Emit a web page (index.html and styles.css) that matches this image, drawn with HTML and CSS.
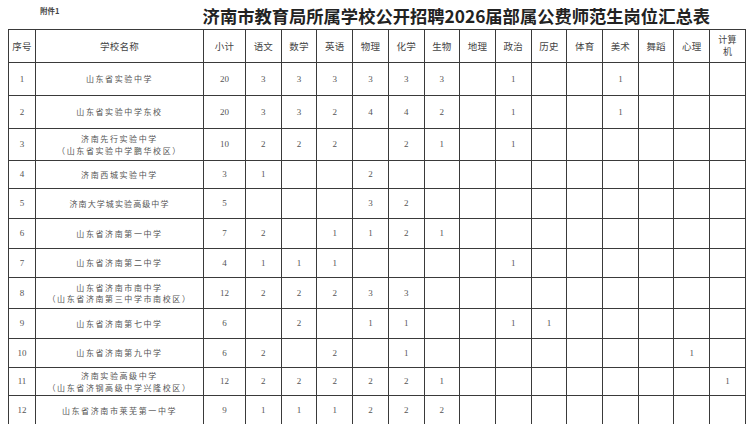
FILE: index.html
```html
<!DOCTYPE html>
<html lang="zh-CN">
<head>
<meta charset="utf-8">
<title>济南市教育局所属学校公开招聘2026届部属公费师范生岗位汇总表</title>
<link rel="stylesheet" href="styles.css">
</head>
<body>
<div class="page">
  <header class="top">
    <span class="annex">附件1</span>
    <h1 class="title">济南市教育局所属学校公开招聘2026届部属公费师范生岗位汇总表</h1>
  </header>
  <table class="grid">
    <colgroup>
      <col class="c-no"><col class="c-name"><col class="c-sum">
      <col><col><col><col><col><col><col><col><col><col><col><col><col><col>
    </colgroup>
    <thead>
      <tr class="h33">
        <th>序号</th><th>学校名称</th><th>小计</th><th>语文</th><th>数学</th><th>英语</th><th>物理</th><th>化学</th><th>生物</th><th>地理</th><th>政治</th><th>历史</th><th>体育</th><th>美术</th><th>舞蹈</th><th>心理</th><th class="two">计算<br>机</th>
      </tr>
    </thead>
    <tbody>
      <tr class="h33"><td>1</td><td class="name">山东省实验中学</td><td>20</td><td>3</td><td>3</td><td>3</td><td>3</td><td>3</td><td>3</td><td></td><td>1</td><td></td><td></td><td>1</td><td></td><td></td><td></td></tr>
      <tr class="h33"><td>2</td><td class="name">山东省实验中学东校</td><td>20</td><td>3</td><td>3</td><td>2</td><td>4</td><td>4</td><td>2</td><td></td><td>1</td><td></td><td></td><td>1</td><td></td><td></td><td></td></tr>
      <tr class="h32"><td>3</td><td class="name">济南先行实验中学<br>（山东省实验中学鹏华校区）</td><td>10</td><td>2</td><td>2</td><td>2</td><td></td><td>2</td><td>1</td><td></td><td>1</td><td></td><td></td><td></td><td></td><td></td><td></td></tr>
      <tr class="h28"><td>4</td><td class="name">济南西城实验中学</td><td>3</td><td>1</td><td></td><td></td><td>2</td><td></td><td></td><td></td><td></td><td></td><td></td><td></td><td></td><td></td><td></td></tr>
      <tr class="h30"><td>5</td><td class="name tight">济南大学城实验高级中学</td><td>5</td><td></td><td></td><td></td><td>3</td><td>2</td><td></td><td></td><td></td><td></td><td></td><td></td><td></td><td></td><td></td></tr>
      <tr class="h30"><td>6</td><td class="name">山东省济南第一中学</td><td>7</td><td>2</td><td></td><td>1</td><td>1</td><td>2</td><td>1</td><td></td><td></td><td></td><td></td><td></td><td></td><td></td><td></td></tr>
      <tr class="h29"><td>7</td><td class="name">山东省济南第二中学</td><td>4</td><td>1</td><td>1</td><td>1</td><td></td><td></td><td></td><td></td><td>1</td><td></td><td></td><td></td><td></td><td></td><td></td></tr>
      <tr class="h31"><td>8</td><td class="name">山东省济南市南中学<br>（山东省济南第三中学市南校区）</td><td>12</td><td>2</td><td>2</td><td>2</td><td>3</td><td>3</td><td></td><td></td><td></td><td></td><td></td><td></td><td></td><td></td><td></td></tr>
      <tr class="h30"><td>9</td><td class="name">山东省济南第七中学</td><td>6</td><td></td><td>2</td><td></td><td>1</td><td>1</td><td></td><td></td><td>1</td><td>1</td><td></td><td></td><td></td><td></td><td></td></tr>
      <tr class="h29"><td>10</td><td class="name">山东省济南第九中学</td><td>6</td><td>2</td><td></td><td>2</td><td></td><td>1</td><td></td><td></td><td></td><td></td><td></td><td></td><td></td><td>1</td><td></td></tr>
      <tr class="h28"><td>11</td><td class="name">济南实验高级中学<br>（山东省济钢高级中学兴隆校区）</td><td>12</td><td>2</td><td>2</td><td>2</td><td>2</td><td>2</td><td>1</td><td></td><td></td><td></td><td></td><td></td><td></td><td></td><td>1</td></tr>
      <tr class="h30"><td>12</td><td class="name">山东省济南市莱芜第一中学</td><td>9</td><td>1</td><td>1</td><td>1</td><td>2</td><td>2</td><td>2</td><td></td><td></td><td></td><td></td><td></td><td></td><td></td><td></td></tr>
    </tbody>
  </table>
</div>
</body>
</html>
```

FILE: styles.css
```css
html, body {
  margin: 0;
  padding: 0;
  background: #ffffff;
}

.page {
  width: 754px;
  height: 424px;
  overflow: hidden;
  font-family: "Noto Sans CJK SC", "Noto Sans", sans-serif;
  color: #333;
}

.top {
  display: flex;
  justify-content: space-between;
  align-items: flex-start;
  height: 29px;
  padding: 0 44px 0 40px;
  box-sizing: border-box;
}

.annex {
  font-size: 7.5px;
  line-height: 8px;
  margin-top: 7px;
  color: #444;
  font-weight: 700;
}

.title {
  margin: 6px 0 0 0;
  font-size: 17.3px;
  line-height: 20px;
  font-weight: 700;
  color: #222;
  letter-spacing: 0;
  white-space: nowrap;
}

.grid {
  margin-left: 8px;
  width: 738px;
  table-layout: fixed;
  border-collapse: collapse;
  border: 1.5px solid #333;
}

.c-no { width: 27px; }
.c-name { width: 168px; }
.c-sum { width: 42px; }

.grid th,
.grid td {
  border: 1px solid #3a3a3a;
  padding: 0;
  text-align: center;
  vertical-align: middle;
  overflow: hidden;
}

.grid th {
  font-size: 9.5px;
  line-height: 11px;
  font-weight: 400;
  color: #444;
  letter-spacing: 0.2px;
}

.grid th.two {
  font-size: 9px;
  line-height: 12px;
}

.grid td {
  font-family: "Liberation Serif", "DejaVu Serif", serif;
  font-size: 9px;
  line-height: 11px;
  color: #555;
}

.grid td.name {
  font-family: "Noto Sans CJK SC", "Noto Sans", sans-serif;
  font-size: 8px;
  line-height: 11.5px;
  letter-spacing: 1.6px;
  color: #555;
}

.grid td.name.tight {
  letter-spacing: 1.1px;
}

.h28 { height: 28px; }
.h29 { height: 29px; }
.h30 { height: 30px; }
.h31 { height: 31px; }
.h32 { height: 32px; }
.h33 { height: 33px; }
```
